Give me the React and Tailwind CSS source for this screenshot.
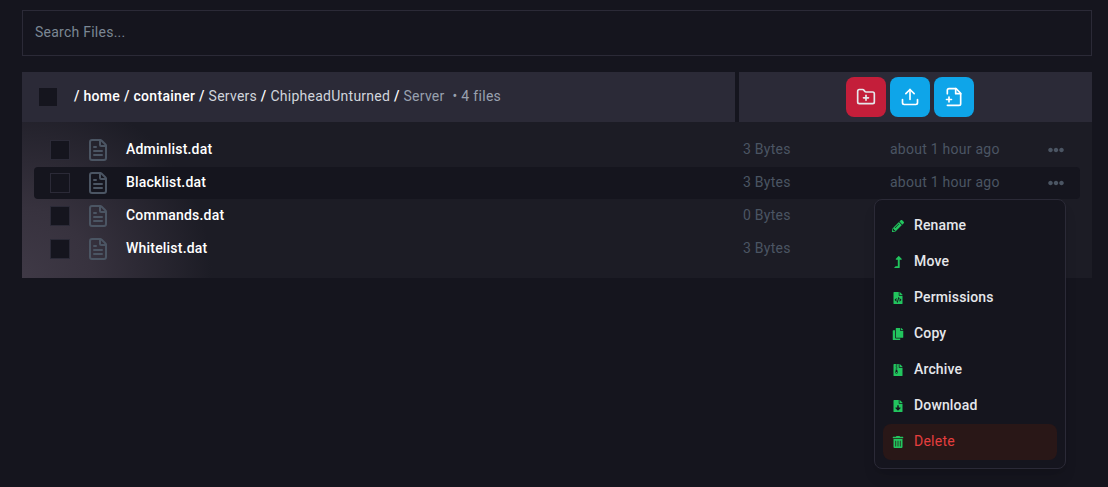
import React from "react";
import { FileText, FolderPlus, Upload } from "lucide-react";
import {
  FaPencilAlt,
  FaLevelUpAlt,
  FaFileCode,
  FaCopy,
  FaFileArchive,
  FaFileDownload,
  FaTrashAlt,
  FaEllipsisH,
} from "react-icons/fa";

const files = [
  { name: "Adminlist.dat", size: "3 Bytes", modified: "about 1 hour ago" },
  { name: "Blacklist.dat", size: "3 Bytes", modified: "about 1 hour ago", active: true },
  { name: "Commands.dat", size: "0 Bytes" },
  { name: "Whitelist.dat", size: "3 Bytes" },
];

const menuItems = [
  { label: "Rename", icon: FaPencilAlt },
  { label: "Move", icon: FaLevelUpAlt },
  { label: "Permissions", icon: FaFileCode },
  { label: "Copy", icon: FaCopy },
  { label: "Archive", icon: FaFileArchive },
  { label: "Download", icon: FaFileDownload },
  { label: "Delete", icon: FaTrashAlt, danger: true },
];

const Checkbox = () => (
  <span className="block h-5 w-5 shrink-0 border border-[#2b2a37] bg-[#15151e]" />
);

const NewFileIcon = () => (
  <svg
    className="h-5 w-5"
    viewBox="0 0 24 24"
    fill="none"
    stroke="currentColor"
    strokeWidth="2"
    strokeLinecap="round"
    strokeLinejoin="round"
  >
    <path d="M4 22h14a2 2 0 0 0 2-2V7.5L14.5 2H6a2 2 0 0 0-2 2v4" />
    <path d="M14 2v6h6" />
    <path d="M3 15h6" />
    <path d="M6 12v6" />
  </svg>
);

const Breadcrumbs = () => (
  <div className="-mt-0.5 ml-4 flex items-center whitespace-pre text-sm font-medium tracking-[0.3px] text-white">
    <span>/ home / container / </span>
    <span className="font-normal tracking-[0.26px] text-gray-300">Servers</span>
    <span> / </span>
    <span className="font-normal tracking-[0.26px] text-gray-300">ChipheadUnturned</span>
    <span> / </span>
    <span className="font-normal tracking-[0.26px] text-gray-400">Server</span>
    <span className="ml-2 font-normal text-gray-400">• 4 files</span>
  </div>
);

const FileRow = ({ file }) => (
  <div
    className={`mb-px flex h-8 items-center rounded-sm text-sm ${
      file.active ? "bg-[#15151e]" : ""
    }`}
  >
    <div className="flex flex-1 items-center pl-4">
      <Checkbox />
      <FileText size={24} className="ml-4 shrink-0 text-[#4b5563]" />
      <span className="ml-4 -mt-0.5 font-medium tracking-[0.2px] text-white">{file.name}</span>
    </div>
    <span className="-mt-0.5 w-[147px] tracking-[0.25px] text-[#4b5563]">{file.size}</span>
    <span className="-mt-0.5 w-[158px] tracking-[0.25px] text-[#4b5563]">{file.modified}</span>
    <FaEllipsisH className="mr-4 h-4 w-4 text-[#4b5563]" />
  </div>
);

const ContextMenu = () => (
  <div className="absolute top-[199px] left-[874px] w-48 rounded-lg border border-[#2b2a37] bg-[#15151e] p-2 shadow-lg">
    {menuItems.map(({ label, icon: Icon, danger }) => (
      <div
        key={label}
        className={`flex h-9 items-center rounded-lg px-2 text-sm ${
          danger ? "bg-[#291717] text-[#e53e3e]" : "text-gray-200"
        }`}
      >
        <span className="flex w-[15px] justify-center pr-px text-[#22c55e]">
          <Icon className="h-3 w-3" />
        </span>
        <span
          className={`-mt-0.5 ml-2 ${
            danger ? "font-normal tracking-[0.25px]" : "font-medium tracking-[0.15px]"
          }`}
        >
          {label}
        </span>
      </div>
    ))}
  </div>
);

const App = () => {
  return (
    <main className="relative h-[487px] w-full overflow-hidden bg-[#15151e] px-4 pt-2.5 font-['Roboto',sans-serif]">
      <div className="ml-1.5 w-[1070px]">
        <div className="h-[46px] border border-[#2b2a37] px-3 pt-[11px] text-sm leading-5 tracking-[0.25px] text-[#7b8794]">
          Search Files...
        </div>

        <div className="mt-4 flex h-[50px] gap-1">
          <div className="flex w-[713px] items-center bg-[#2b2a37] pl-4">
            <Checkbox />
            <Breadcrumbs />
          </div>
          <div className="flex flex-1 items-center justify-center gap-1 bg-[#2b2a37] pr-[11px] text-white">
            <button className="flex h-10 w-10 items-center justify-center rounded-lg bg-[#c41e3a] text-gray-200">
              <FolderPlus size={20} />
            </button>
            <button className="flex h-10 w-10 items-center justify-center rounded-lg bg-[#0ea5e9]">
              <Upload size={20} />
            </button>
            <button className="flex h-10 w-10 items-center justify-center rounded-lg bg-[#0ea5e9]">
              <NewFileIcon />
            </button>
          </div>
        </div>

        <div className="h-[156px] bg-[#1c1c25] bg-[radial-gradient(circle_at_0px_156px,#3f3946_0px,#37323e_70px,#1c1c25_190px)] p-3">
          {files.map((file) => (
            <FileRow key={file.name} file={file} />
          ))}
        </div>
      </div>
      <ContextMenu />
    </main>
  );
};

export default App;
